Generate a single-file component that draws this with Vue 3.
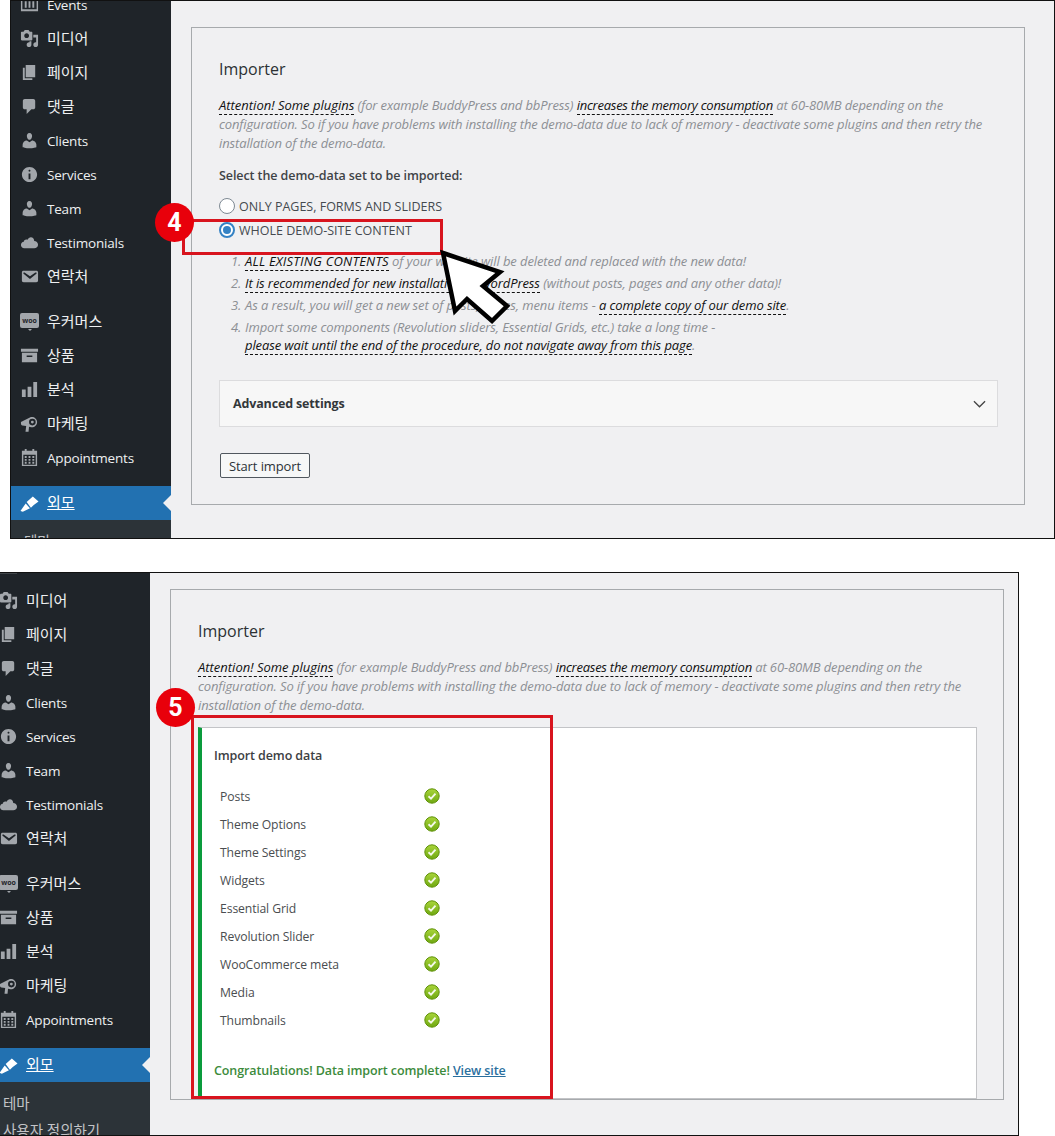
<script setup>
const menu = [
  { label: 'Events', icon: 'events' },
  { label: '미디어', icon: 'media', ko: true },
  { label: '페이지', icon: 'page', ko: true },
  { label: '댓글', icon: 'comment', ko: true },
  { label: 'Clients', icon: 'user' },
  { label: 'Services', icon: 'info' },
  { label: 'Team', icon: 'user' },
  { label: 'Testimonials', icon: 'cloud' },
  { label: '연락처', icon: 'mail', ko: true },
]
const menu2 = [
  { label: '우커머스', icon: 'woo', ko: true },
  { label: '상품', icon: 'box', ko: true },
  { label: '분석', icon: 'chart', ko: true },
  { label: '마케팅', icon: 'mega', ko: true },
  { label: 'Appointments', icon: 'cal' },
]
const paths = {
  media: 'M13 11V4c0-.55-.45-1-1-1h-1.67L9 1H5L3.67 3H2c-.55 0-1 .45-1 1v7c0 .55.45 1 1 1h10c.55 0 1-.45 1-1zM7 4.5c1.38 0 2.5 1.12 2.5 2.5S8.38 9.5 7 9.5 4.5 8.38 4.5 7 5.62 4.5 7 4.5zM14 6h5v10.5c0 1.38-1.12 2.5-2.5 2.5S14 17.88 14 16.5s1.12-2.5 2.5-2.5c.17 0 .34.02.5.05V9h-3V6zm-4 8.05V13h2v3.5c0 1.38-1.12 2.5-2.5 2.5S7 17.88 7 16.5 8.12 14 9.5 14c.17 0 .34.02.5.05z',
  page: 'M6 15V2h10v13H6zm-1 1h8v2H3V5h2v11z',
  comment: 'M5 2h9c1.1 0 2 .9 2 2v7c0 1.1-.9 2-2 2h-2l-5 5v-5H5c-1.1 0-2-.9-2-2V4c0-1.1.9-2 2-2z',
  user: 'M10 9.25c-2.27 0-2.73-3.44-2.73-3.44C7 4.02 7.82 2 9.97 2c2.16 0 2.98 2.02 2.71 3.81 0 0-.41 3.44-2.68 3.44zm0 2.57L12.72 10c2.39 0 4.52 2.33 4.52 4.53v2.49s-3.65 1.13-7.24 1.13c-3.65 0-7.24-1.13-7.24-1.13v-2.49c0-2.25 1.94-4.48 4.47-4.48z',
  info: 'M10 2c4.42 0 8 3.58 8 8s-3.58 8-8 8-8-3.58-8-8 3.58-8 8-8zm1 4c0-.55-.45-1-1-1s-1 .45-1 1 .45 1 1 1 1-.45 1-1zm0 9V9H9v6h2z',
  cloud: 'M15 8.500c2 .1 4 1.600 4 3.900 0 2.200-1.800 3.600-4 3.600H4.500C2.500 16 1 14.500 1 12.600c0-1.800 1.300-3.200 3-3.400 0-1.400 1.200-2.400 2.500-2.400.5 0 1 .1 1.400.4C8.700 5.500 10 4.500 11.500 4.500c1.900 0 3.400 1.700 3.500 4z',
  mail: 'M3.870 4h13.250C18.370 4 19 4.590 19 5.790v8.420c0 1.190-.630 1.790-1.880 1.790H3.870c-1.250 0-1.880-.6-1.880-1.790V5.790c0-1.200.630-1.790 1.880-1.790zm6.620 8.600l6.740-5.530c.240-.2.430-.66.130-1.070-.290-.410-.820-.420-1.170-.170l-5.700 3.860L4.800 5.830c-.350-.250-.880-.240-1.170.170-.3.410-.110.870.130 1.070z',
  box: 'M1 3h18v3H1zM2 7h16v10H2zM7 10v1.500h6V10z',
  chart: 'M18 18V2h-4v16h4zm-6 0V7H8v11h4zm-6 0v-8H2v8h4z',
  mega: 'M1 8.500L11.500 3.200c2.800-.8 6.500 1.500 6.500 5.300 0 3.800-3.200 6-6.200 5.500L9.500 13.500 9 18.800H5.800l.7-6.300L2.500 12.200C1.500 12 1 11 1 10zM13 5a3.500 3.500 0 1 0 0 7 3.500 3.500 0 0 0 0-7zm0 2a1.500 1.500 0 1 1 0 3 1.500 1.500 0 0 1 0-3z',
  cal: 'M5 1h2v2h6V1h2v2h3v16H2V3h3zM3.500 7v10.500h13V7zM5 8.500h2v2H5zm4 0h2v2H9zm4 0h2v2h-2zM5 11.500h2v2H5zm4 0h2v2H9zm4 0h2v2h-2zM5 14.500h2v2H5zm4 0h2v2H9zm4 0h2v2h-2z',
  events: 'M1 3h18v14H1zM2.500 5v10h15V5zM5 6.500h2v7H5zm4 0h2v7H9zm4 0h2v7h-2z',
  brush: 'M7 8.500L13.500 2.500 19.500 8 14.500 11.500 11.500 14.500zM6 10l4.500 5-7.500 3.800-2.500-1z',
}
const steps = ['Posts', 'Theme Options', 'Theme Settings', 'Widgets', 'Essential Grid', 'Revolution Slider', 'WooCommerce meta', 'Media', 'Thumbnails']
const shots = [
  { id: 'first', number: 4 },
  { id: 'second', number: 5 },
]
</script>

<template>
  <div class="page">
    <section v-for="shot in shots" :key="shot.id" class="shot" :class="shot.id">
      <aside class="side">
        <ul class="menu">
          <li v-for="m in menu" :key="m.label" class="item">
            <svg class="ico" viewBox="0 0 20 20"><path :d="paths[m.icon]" fill-rule="evenodd" /></svg>
            <span :class="m.ko ? 'ko' : 'en'">{{ m.label }}</span>
          </li>
        </ul>
        <ul class="menu group">
          <li v-for="m in menu2" :key="m.label" class="item">
            <span v-if="m.icon === 'woo'" class="woo">woo</span>
            <svg v-else class="ico" viewBox="0 0 20 20"><path :d="paths[m.icon]" fill-rule="evenodd" /></svg>
            <span :class="m.ko ? 'ko' : 'en'">{{ m.label }}</span>
          </li>
        </ul>
        <div class="item active">
          <svg class="ico" viewBox="0 0 20 20"><path :d="paths.brush" /></svg>
          <span class="ko under">외모</span>
        </div>
        <ul class="sub">
          <li>테마</li>
          <li>사용자 정의하기</li>
        </ul>
      </aside>

      <main class="content">
        <div class="panel">
          <h2 class="title">Importer</h2>
          <p class="note">
            <span class="mark">Attention! Some plugins</span> (for example BuddyPress and bbPress)
            <span class="mark tight">increases the memory consumption</span> at 60-80MB depending on the
            configuration. So if you have problems with installing the demo-data due to lack of memory - deactivate some plugins and then retry the installation of the demo-data.
          </p>

          <template v-if="shot.number === 4">
            <p class="select">Select the demo-data set to be imported:</p>
            <label class="radio"><i class="dot"></i>ONLY PAGES, FORMS AND SLIDERS</label>
            <label class="radio"><i class="dot on"></i>WHOLE DEMO-SITE CONTENT</label>
            <ol class="steps">
              <li><span class="mark wide">ALL EXISTING CONTENTS</span> of your website will be deleted and replaced with the new data!</li>
              <li><span class="mark">It is recommended for new installation of WordPress</span> (without posts, pages and any other data)!</li>
              <li>As a result, you will get a new set of posts, pages, menu items - <span class="mark">a complete copy of our demo site</span>.</li>
              <li>Import some components (Revolution sliders, Essential Grids, etc.) take a long time -<br /><span class="mark">please wait until the end of the procedure, do not navigate away from this page</span>.</li>
            </ol>
            <div class="advanced">
              <span>Advanced settings</span>
              <svg class="chev" viewBox="0 0 14 8"><path d="M1 1l6 6 6-6" fill="none" stroke="#444" stroke-width="1.400" /></svg>
            </div>
            <button class="start" type="button">Start import</button>
          </template>

          <div v-else class="result">
            <h3 class="result-title">Import demo data</h3>
            <ul class="result-list">
              <li v-for="s in steps" :key="s">
                <span class="step-name">{{ s }}</span>
                <svg class="check" viewBox="0 0 16 16">
                  <defs>
                    <linearGradient id="okfill" x1="0" y1="0" x2="0" y2="1">
                      <stop offset="0" stop-color="#a9d53a" />
                      <stop offset="1" stop-color="#6fa811" />
                    </linearGradient>
                  </defs>
                  <circle cx="8" cy="8" r="7.200" fill="url(#okfill)" stroke="#5f9108" />
                  <path d="M4.500 8.300l2.500 2.400 4.500-5" fill="none" stroke="#f4f8ea" stroke-width="1.900" />
                </svg>
              </li>
            </ul>
            <p class="done">Congratulations! Data import complete! <a class="link">View site</a></p>
          </div>
        </div>
      </main>

      <template v-if="shot.number === 4">
        <div class="redbox box-four"></div>
        <div class="badge badge-four">4</div>
        <svg class="cursor" viewBox="0 0 80 80">
          <path d="M3 3L60 22 43 36 67 56 52 71 27 49 15 61Z" fill="#fff" stroke="#000" stroke-width="4.500" stroke-linejoin="miter" />
        </svg>
      </template>
      <template v-else>
        <div class="redbox box-five"></div>
        <div class="badge badge-five">5</div>
      </template>
    </section>
  </div>
</template>

<style scoped>
.page { width: 1055px; height: 1136px; background: #fff; position: relative; overflow: hidden; font-family: "Open Sans", "Noto Sans CJK KR", sans-serif; }
ul, ol, p, h2, h3 { margin: 0; padding: 0; list-style: none; }
.shot { position: relative; display: flex; overflow: hidden; background: #f0f0f2; box-sizing: border-box; border: 1px solid #111; }
.first { width: 1045px; height: 539px; margin-left: 10px; margin-bottom: 33px; }
.second { width: 1019px; height: 564px; border-left: 0; }
.side { width: 160px; flex: none; background: #1f2429; color: #eef0f1; font-size: 13.500px; letter-spacing: -0.200px; }
.first .side { margin-top: -14px; height: 600px; }
.second .side { margin-top: -24px; margin-left: -10px; height: 620px; }
.item { height: 34px; display: flex; align-items: center; padding-left: 9px; gap: 8px; box-sizing: border-box; position: relative; }
.ico { width: 19px; height: 19px; fill: #a2a6ab; flex: none; }
.ko { font-size: 15px; letter-spacing: 0; padding-bottom: 2px; }
.en { padding-top: 2px; }
.group { margin-top: 11px; }
.woo { width: 19px; height: 15px; margin-bottom: 2px; border-radius: 2px; background: #a2a6ab; color: #1f2429; font-size: 7px; font-weight: 700; text-align: center; line-height: 15px; flex: none; letter-spacing: 0; position: relative; }
.woo::after { content: ""; position: absolute; left: 8px; bottom: -3px; border: 2px solid transparent; border-top-color: #a2a6ab; border-bottom: 0; }
.active { margin-top: 12px; background: #2271b1; color: #fff; }
.active .ico { fill: #fff; }
.active .ko { padding-bottom: 4px; }
.active::after { content: ""; position: absolute; right: 0; top: 9px; border: 8px solid transparent; border-right-color: #f0f0f2; border-left: 0; }
.under { text-decoration: underline; }
.sub { background: #2c3338; padding: 8px 0 0 13px; color: #c3c4c7; font-size: 14.500px; letter-spacing: 0; }
.sub li { height: 27px; line-height: 27px; }
.content { flex: 1; padding: 26px 29px 0 20px; min-width: 0; }
.second .content { padding: 16px 14px 0 20px; }
.panel { border: 1px solid #a7aaad; padding: 27px 26px 26px 27px; box-sizing: border-box; color: #333; }
.title { font-size: 16px; font-weight: 500; color: #2c3034; line-height: 28px; height: 28px; }
.note { margin-top: 13px; font-size: 13px; font-style: italic; line-height: 19px; color: #8c8f94; letter-spacing: -0.120px; }
.mark { color: #111; border-bottom: 1px dashed #111; letter-spacing: 0; }
.note .tight { letter-spacing: -0.250px; }
.select { margin-top: 13px; font-size: 12.500px; font-weight: 600; line-height: 19px; color: #3f4347; letter-spacing: -0.080px; }
.radio { display: flex; align-items: center; gap: 4px; height: 24px; font-size: 12.500px; color: #454a4f; letter-spacing: 0; }
.select + .radio { margin-top: 9px; }
.dot { width: 16px; height: 16px; border-radius: 50%; border: 1px solid #7e8993; background: #fff; box-sizing: border-box; flex: none; }
.dot.on { border: 2px solid #3582c4; position: relative; }
.dot.on::after { content: ""; position: absolute; left: 2px; top: 2px; width: 8px; height: 8px; border-radius: 50%; background: #3582c4; }
.steps { margin-top: 10px; padding-left: 26px; font-size: 13px; font-style: italic; color: #8c8f94; line-height: 18px; letter-spacing: -0.100px; }
.steps li { list-style: none; margin-bottom: 4px; counter-increment: s; position: relative; }
.steps li::before { content: counter(s) "."; position: absolute; left: -14px; }
.steps .mark { letter-spacing: -0.100px; }
.steps .wide { letter-spacing: 0.200px; }
.advanced { margin-top: 26px; height: 47px; background: #f7f7f7; border: 1px solid #dcdcde; box-sizing: border-box; padding: 0 11px 0 13px; display: flex; align-items: center; justify-content: space-between; font-size: 12.500px; font-weight: 700; color: #33373a; letter-spacing: -0.150px; }
.chev { width: 13px; height: 8px; }
.start { display: block; margin-top: 26px; margin-left: 1px; width: 90px; height: 25px; padding: 0; background: #f6f7f7; border: 1px solid #50575e; border-radius: 2px; font: 13px "Open Sans", sans-serif; color: #2c3338; letter-spacing: -0.100px; }
.result { margin-top: 12px; height: 372px; margin-bottom: -26px; background: #fff; border: 1px solid #c3c4c7; border-left: 4px solid #0a9b3c; box-sizing: border-box; padding: 18px 0 0 12px; }
.result-title { font-size: 12.500px; font-weight: 600; line-height: 20px; color: #3c4043; letter-spacing: -0.100px; }
.result-list { margin-top: 16px; padding-left: 6px; }
.result-list li { display: flex; align-items: center; height: 28px; font-size: 12.200px; color: #4a4d50; letter-spacing: -0.100px; }
.step-name { width: 204px; }
.check { width: 16px; height: 16px; }
.done { margin-top: 27px; font-size: 12.500px; font-weight: 600; color: #3c8b3c; letter-spacing: -0.100px; line-height: 20px; }
.link { color: #2a6f9e; text-decoration: underline; }
.redbox { position: absolute; border: 3px solid #d8141e; box-sizing: border-box; }
.box-four { left: 171px; top: 218px; width: 261px; height: 36px; }
.box-five { left: 191px; top: 142px; width: 362px; height: 384px; }
.badge { position: absolute; width: 39px; height: 39px; border-radius: 50%; background: #e8000b; color: #fff; font: 700 25px/39px "Roboto", sans-serif; text-align: center; }
.badge-four { left: 144px; top: 202px; }
.badge-five { left: 156px; top: 115px; }
.cursor { position: absolute; left: 429px; top: 249px; width: 80px; height: 80px; overflow: visible; }
</style>

<style>
html, body { margin: 0; padding: 0; background: #fff; }
</style>
